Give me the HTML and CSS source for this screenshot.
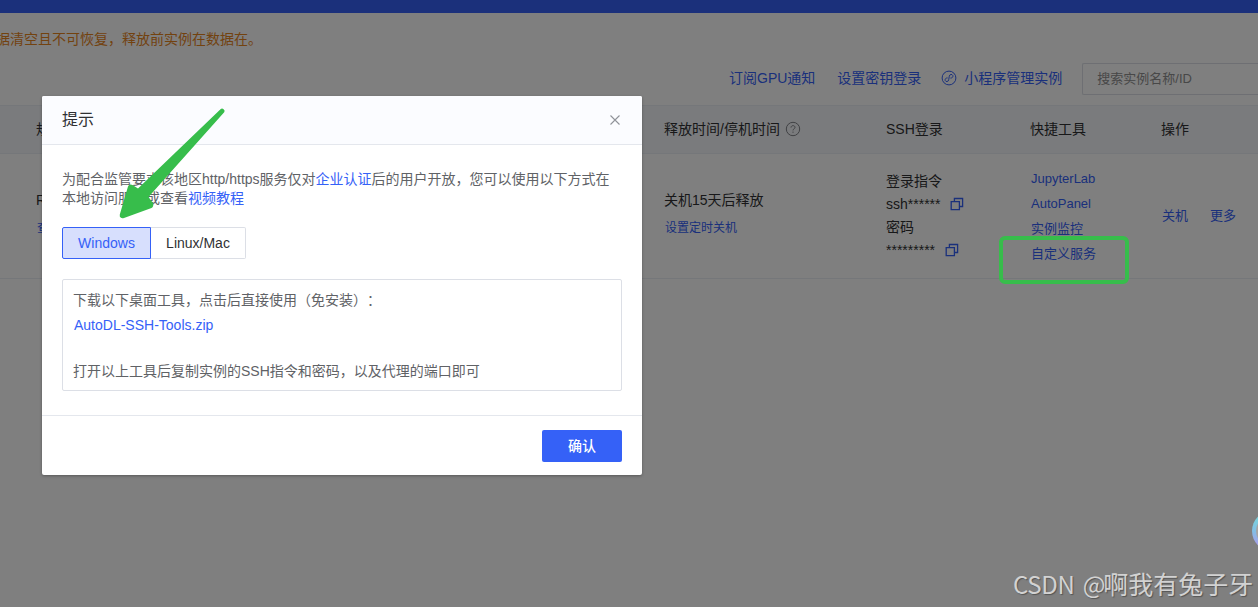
FILE: index.html
```html
<!DOCTYPE html>
<html lang="zh-CN">

<head>
    <meta charset="UTF-8">
    <meta name="viewport" content="width=device-width, initial-scale=1.0">
    <title>容器实例</title>
    <link rel="stylesheet" href="styles.css">
</head>

<body>
    <div class="page">
        <div class="top-bar"></div>
        <div class="warning">据清空且不可恢复，释放前实例在数据在。</div>
        <div class="toolbar">
            <a class="link">订阅GPU通知</a>
            <a class="link">设置密钥登录</a>
            <a class="link mini-app">
                <svg width="16" height="16" viewBox="0 0 16 16" fill="none" stroke="currentColor">
                    <circle cx="8" cy="8" r="6.9" />
                    <path d="M6.6 7.9C4.6 7.9 3.8 9.2 4.2 10.5C4.9 12.2 7.4 11.9 7.7 9.8L8.3 6.2C8.7 4.1 11.1 3.8 11.8 5.5C12.2 6.8 11.4 8.1 9.4 8.1" />
                </svg>
                <span>小程序管理实例</span>
            </a>
            <div class="search">搜索实例名称/ID</div>
        </div>
        <div class="table">
            <div class="row head">
                <div>规</div>
                <div class="with-icon">
                    <span>释放时间/停机时间</span>
                    <svg class="help" width="16" height="16" viewBox="0 0 16 16" fill="none" stroke="currentColor">
                        <circle cx="8" cy="8" r="6.7" />
                        <path d="M6 6.6C6 4 10 4 10 6.4C10 7.8 8 7.8 8 9.4M8 10.6V11.8" />
                    </svg>
                </div>
                <div>SSH登录</div>
                <div>快捷工具</div>
                <div>操作</div>
            </div>
            <div class="row body">
                <div class="spec">
                    <div>R</div>
                    <a class="link mini">查</a>
                </div>
                <div class="release">
                    <div>关机15天后释放</div>
                    <a class="link mini">设置定时关机</a>
                </div>
                <div class="ssh">
                    <div>登录指令</div>
                    <div class="secret">
                        <span>ssh******</span>
                        <svg class="copy" width="14" height="14" viewBox="0 0 14 14" fill="none" stroke="currentColor" stroke-width="1.3">
                            <path d="M1.2 4.6H9.4V12.6H1.2ZM4.4 4.4V1.5H12.6V9.5H9.6" />
                        </svg>
                    </div>
                    <div>密码</div>
                    <div class="secret">
                        <span>*********</span>
                        <svg class="copy" width="14" height="14" viewBox="0 0 14 14" fill="none" stroke="currentColor" stroke-width="1.3">
                            <path d="M1.2 4.6H9.4V12.6H1.2ZM4.4 4.4V1.5H12.6V9.5H9.6" />
                        </svg>
                    </div>
                </div>
                <div class="tools">
                    <a class="link small">JupyterLab</a>
                    <a class="link small">AutoPanel</a>
                    <a class="link small">实例监控</a>
                    <a class="link small">自定义服务</a>
                </div>
                <div class="actions">
                    <a class="link small">关机</a>
                    <a class="link small">更多</a>
                </div>
            </div>
        </div>
    </div>

    <div class="mask">
        <div class="dialog">
            <div class="dialog-header">
                <span>提示</span>
                <svg width="12" height="12" viewBox="0 0 12 12" fill="none" stroke="#909399" stroke-width="1.1">
                    <path d="M1.5 1.5L10.5 10.5M10.5 1.5L1.5 10.5" />
                </svg>
            </div>
            <div class="dialog-body">
                <p class="tip">为配合监管要求该地区http/https服务仅对<a class="link">企业认证</a>后的用户开放，您可以使用以下方式在<br>本地访问服务或查看<a class="link">视频教程</a></p>
                <div class="tabs">
                    <div class="tab active">Windows</div>
                    <div class="tab">Linux/Mac</div>
                </div>
                <div class="box">
                    <div class="box-line">下载以下桌面工具，点击后直接使用（免安装）：</div>
                    <a class="link box-line file">AutoDL-SSH-Tools.zip</a>
                    <div class="box-line last">打开以上工具后复制实例的SSH指令和密码，以及代理的端口即可</div>
                </div>
            </div>
            <div class="dialog-footer">
                <div class="confirm">确认</div>
            </div>
        </div>
    </div>

    <svg class="arrow" width="110" height="116" viewBox="0 0 110 116">
        <path d="M101.5 2.2Q103 0.8 104.6 2.2Q106.4 3.6 105.2 5.2L29.5 90L34 96Q35 99.5 32.5 101L5 111Q2 112 0.8 109.5V107.5L9 79.5Q10.5 76.5 13.5 78L19 81.5Z" fill="#37bd4b" />
    </svg>
    <div class="marker"></div>
    <div class="bubble"></div>
    <div class="watermark"><span>CSDN @</span>啊我有兔子牙</div>
</body>

</html>
```
FILE: styles.css
```css
* {
    box-sizing: border-box;
}

body {
    margin: 0;
    height: 607px;
    position: relative;
    overflow: hidden;
    font-family: "Liberation Sans", "Noto Sans CJK SC", sans-serif;
    font-size: 14px;
    line-height: 20px;
    text-spacing-trim: space-all;
    color: #303133;
    background: #fff;
}

.link {
    color: #3561f7;
}

.small {
    font-size: 13px;
}

.mini {
    font-size: 12px;
}

.top-bar {
    height: 13px;
    background: #3660f6;
}

.warning {
    height: 50px;
    padding-top: 16px;
    margin-left: -4px;
    color: #e6851e;
}

.toolbar {
    display: flex;
    align-items: center;
    height: 32px;
    padding-left: 729px;
    gap: 22px;
    white-space: nowrap;
}

.toolbar .link {
    margin-bottom: 2px;
}

.mini-app {
    display: flex;
    align-items: center;
    gap: 7px;
    margin-left: -2px;
}

.search {
    flex: 1;
    height: 32px;
    margin-left: -2px;
    padding: 5px 14px;
    border: 1px solid #dcdfe6;
    border-right: none;
    border-radius: 2px 0 0 2px;
    font-size: 13px;
    color: #909090;
}

.table {
    margin-top: 10px;
}

.row {
    display: grid;
    grid-template-columns: 628px 222px 144px 131px 1fr;
    padding-left: 36px;
    border-bottom: 1px solid #ebeef5;
}

.head {
    height: 49px;
    align-items: center;
    padding-bottom: 2px;
    border-top: 1px solid #ebeef5;
    background: #f5f7fa;
}

.with-icon {
    display: flex;
    align-items: center;
    gap: 5px;
}

.help {
    color: #808288;
}

.body {
    height: 125px;
}

.spec,
.release {
    display: flex;
    flex-direction: column;
    gap: 8px;
    padding: 36px 0 0 1px;
}

.release > div,
.spec > div {
    margin-left: -1px;
}

.ssh {
    padding-top: 16px;
    line-height: 23px;
}

.secret {
    display: flex;
    align-items: center;
    gap: 9.5px;
}

.copy {
    color: #3561f7;
    margin-bottom: 1px;
}

.tools {
    display: flex;
    flex-direction: column;
    gap: 5px;
    padding: 15px 0 0 1px;
}

.actions {
    display: flex;
    gap: 22px;
    padding: 52px 0 0 1px;
}

.mask {
    position: absolute;
    inset: 0;
    background: rgba(0, 0, 0, 0.5);
    padding: 96px 0 0 42px;
}

.dialog {
    width: 600px;
    height: 379px;
    background: #fff;
    border-radius: 2px;
    box-shadow: 0 1px 3px rgba(0, 0, 0, 0.3);
    color: #606266;
}

.dialog-header {
    display: flex;
    justify-content: space-between;
    align-items: center;
    height: 49px;
    padding: 0 21px 0 20px;
    border-bottom: 1px solid #e4e7ed;
    border-radius: 2px 2px 0 0;
    background: #fbfcff;
    font-size: 16px;
    color: #303133;
}

.dialog-body {
    height: 270px;
    padding: 25px 20px 0;
}

.tip {
    margin: 0;
    line-height: 19px;
    white-space: nowrap;
}

.tabs {
    display: flex;
    margin-top: 19px;
}

.tab {
    height: 32px;
    width: 95px;
    line-height: 30px;
    text-align: center;
    border: 1px solid #dcdfe6;
    border-left: none;
    border-radius: 0 2px 2px 0;
    color: #303133;
}

.tab.active {
    width: 89px;
    border: 1px solid #3561f7;
    border-radius: 2px 0 0 2px;
    background: #d7dffd;
    color: #3561f7;
}

.box {
    height: 112px;
    margin-top: 20px;
    padding: 10px 10px 0;
    border: 1px solid #dcdfe6;
    border-radius: 2px;
}

.box-line {
    display: block;
    line-height: 20px;
    margin-bottom: 5px;
}

.file {
    margin-left: 1px;
}

.last {
    margin-top: 26px;
}

.dialog-footer {
    display: flex;
    justify-content: flex-end;
    height: 60px;
    padding: 14px 20px;
    border-top: 1px solid #e4e7ed;
}

.confirm {
    width: 80px;
    height: 32px;
    line-height: 32px;
    text-align: center;
    border-radius: 2px;
    background: #3561f7;
    color: #fff;
    font-weight: 500;
}

.arrow {
    position: absolute;
    left: 119px;
    top: 107px;
}

.marker {
    position: absolute;
    left: 999px;
    top: 236px;
    width: 130px;
    height: 48px;
    border: 4px solid #37bd4b;
    border-radius: 6px;
}

.bubble {
    position: absolute;
    left: 1252px;
    top: 511px;
    width: 40px;
    height: 40px;
    border: 4px solid transparent;
    border-radius: 50%;
    background: linear-gradient(#a5a5a5, #a5a5a5) padding-box, linear-gradient(#7cd0dc 20%, #82bfe6 50%, #a79fe8 85%) border-box;
}

.watermark {
    position: absolute;
    left: 1013px;
    top: 565px;
    font-family: "Noto Sans CJK SC", sans-serif;
    font-size: 25px;
    line-height: 36px;
    color: #d2d2d2;
    text-shadow: 1px 1px 1px #555;
    white-space: nowrap;
}

.watermark span {
    font-size: 24px;
    letter-spacing: -0.3px;
    word-spacing: 3px;
    margin-right: -2px;
}
```
